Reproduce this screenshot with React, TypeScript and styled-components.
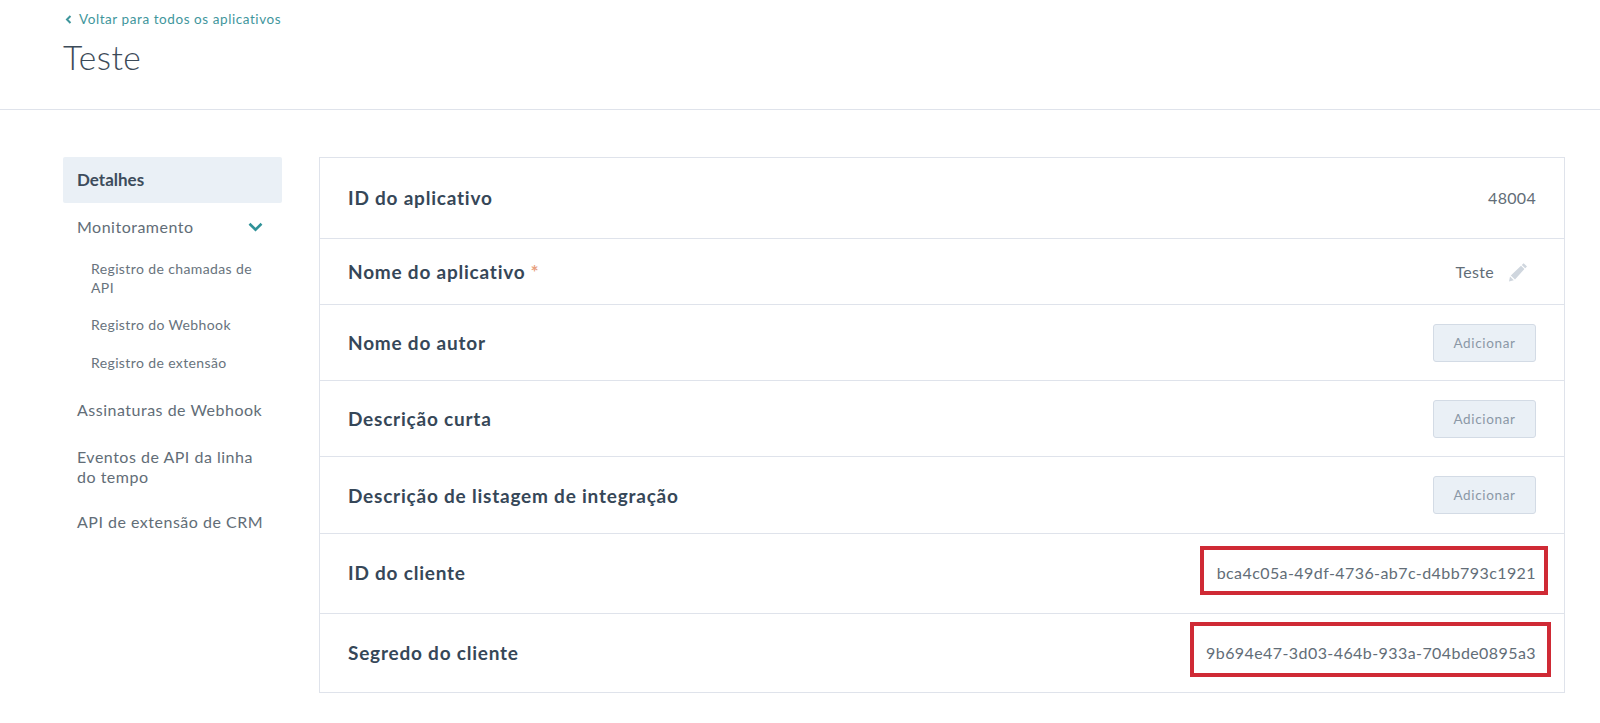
import React from 'react'
import styled, { createGlobalStyle } from 'styled-components'

const GlobalStyle = createGlobalStyle`
  html, body {
    margin: 0;
    padding: 0;
    background: #fff;
    font-family: Lato, "Open Sans", sans-serif;
    color: #33475b;
  }
`

const Wrapper = styled.div`
  width: 1600px;
  height: 723px;
  overflow: hidden;
`

const Header = styled.header`
  height: 110px;
  box-sizing: border-box;
  padding: 10px 63px 0;
  border-bottom: 1px solid #dfe3eb;
`

const BackLink = styled.a`
  display: flex;
  align-items: center;
  gap: 7px;
  height: 18px;
  padding-left: 2px;
  font-size: 13.5px;
  letter-spacing: 0.57px;
  color: #3f969c;
`

const Title = styled.h1`
  margin: 9px 0 0;
  font-size: 33.5px;
  line-height: 40px;
  font-weight: 300;
  letter-spacing: 0.5px;
  color: #3c4b59;
`

const Body = styled.div`
  display: flex;
  padding: 47px 35px 0 63px;
  gap: 37px;
`

const Sidebar = styled.nav`
  width: 219px;
  flex: none;
`

const SideActive = styled.div`
  height: 46px;
  box-sizing: border-box;
  display: flex;
  align-items: center;
  padding: 0 0 2px 14px;
  background: #eaf0f6;
  border-radius: 2px;
  font-size: 17px;
  font-weight: 700;
  color: #3d4c5c;
`

const SideItem = styled.div<{ $top: number }>`
  display: flex;
  justify-content: space-between;
  align-items: center;
  margin-top: ${(p) => p.$top}px;
  padding: 0 10px 0 14px;
  font-size: 16px;
  line-height: 20px;
  letter-spacing: 0.5px;
  color: #626d77;
`

const SubItem = styled.div<{ $top: number }>`
  margin-top: ${(p) => p.$top}px;
  padding: 0 20px 0 28px;
  font-size: 14px;
  line-height: 19px;
  letter-spacing: 0.38px;
  color: #68737d;
`

const Card = styled.section`
  width: 1246px;
  flex: none;
  box-sizing: border-box;
  border: 1px solid #dfe3eb;
`

const Row = styled.div<{ $height: number; $lift?: number }>`
  height: ${(p) => p.$height}px;
  box-sizing: border-box;
  display: flex;
  justify-content: space-between;
  align-items: center;
  padding: 0 28px ${(p) => p.$lift || 0}px;
  border-bottom: 1px solid #dfe3eb;

  &:last-child {
    border-bottom: 0;
  }
`

const Label = styled.div`
  font-size: 19px;
  font-weight: 700;
  letter-spacing: 0.78px;
  color: #364758;
`

const Required = styled.span`
  margin-left: 5px;
  color: #e8a17f;
`

const Value = styled.div`
  display: flex;
  align-items: center;
  font-size: 16px;
  letter-spacing: 0.3px;
  color: #626d77;
`

const Secret = styled(Value)<{ $left: number; $right: number; $top: number; $bottom: number }>`
  position: relative;
  letter-spacing: 0.42px;

  &::after {
    content: '';
    position: absolute;
    left: ${(p) => p.$left}px;
    right: ${(p) => p.$right}px;
    top: ${(p) => p.$top}px;
    bottom: ${(p) => p.$bottom}px;
    border: 4.5px solid #cf2a35;
  }
`

const EditIcon = styled.svg`
  width: 20px;
  height: 20px;
  margin: 0 8px 0 14px;
  fill: #cfd6de;
`

const ChevronIcon = styled.svg`
  width: 15px;
  height: 10px;
  margin-right: 9px;
  fill: none;
  stroke: #2f9298;
  stroke-width: 2.6;
`

const AddButton = styled.button`
  width: 103px;
  height: 38px;
  padding: 0;
  background: #eaf0f6;
  border: 1px solid #d3dbe5;
  border-radius: 3px;
  font-family: inherit;
  font-size: 13.5px;
  letter-spacing: 0.65px;
  color: #8b98a6;
`

const BackChevron = () => (
  <svg width="7" height="9" viewBox="0 0 7 9" fill="none" stroke="#3f969c" strokeWidth="2">
    <path d="M5.5 1 L2 4.5 L5.5 8" />
  </svg>
)

const DownChevron = () => (
  <ChevronIcon viewBox="0 0 15 10">
    <path d="M1.5 1.8 L7.5 7.6 L13.5 1.8" />
  </ChevronIcon>
)

const Pencil = () => (
  <EditIcon viewBox="0 0 20 20">
    <path d="M15.6 1.2 L19 4.4 L17.2 6.2 L13.8 3 Z M13 3.8 L16.4 7 L7 17.4 L2.8 13.4 Z M2 14.6 L5.8 18.3 L1 19.6 Z" />
  </EditIcon>
)

export default function App() {
  return (
    <Wrapper>
      <GlobalStyle />
      <Header>
        <BackLink>
          <BackChevron />
          Voltar para todos os aplicativos
        </BackLink>
        <Title>Teste</Title>
      </Header>
      <Body>
        <Sidebar>
          <SideActive>Detalhes</SideActive>
          <SideItem $top={14}>
            Monitoramento
            <DownChevron />
          </SideItem>
          <SubItem $top={22}>Registro de chamadas de API</SubItem>
          <SubItem $top={18}>Registro do Webhook</SubItem>
          <SubItem $top={19}>Registro de extensão</SubItem>
          <SideItem $top={28}>Assinaturas de Webhook</SideItem>
          <SideItem $top={27}>Eventos de API da linha do tempo</SideItem>
          <SideItem $top={25}>API de extensão de CRM</SideItem>
        </Sidebar>
        <Card>
          <Row $height={81} $lift={2}>
            <Label>ID do aplicativo</Label>
            <Value>48004</Value>
          </Row>
          <Row $height={66}>
            <Label>
              Nome do aplicativo<Required>*</Required>
            </Label>
            <Value>
              Teste
              <Pencil />
            </Value>
          </Row>
          <Row $height={76}>
            <Label>Nome do autor</Label>
            <AddButton>Adicionar</AddButton>
          </Row>
          <Row $height={76}>
            <Label>Descrição curta</Label>
            <AddButton>Adicionar</AddButton>
          </Row>
          <Row $height={77}>
            <Label>Descrição de listagem de integração</Label>
            <AddButton>Adicionar</AddButton>
          </Row>
          <Row $height={80} $lift={2}>
            <Label>ID do cliente</Label>
            <Secret $left={-17} $right={-12} $top={-17} $bottom={-13}>
              bca4c05a-49df-4736-ab7c-d4bb793c1921
            </Secret>
          </Row>
          <Row $height={78} $lift={2}>
            <Label>Segredo do cliente</Label>
            <Secret $left={-16} $right={-15} $top={-21} $bottom={-15}>
              9b694e47-3d03-464b-933a-704bde0895a3
            </Secret>
          </Row>
        </Card>
      </Body>
    </Wrapper>
  )
}
